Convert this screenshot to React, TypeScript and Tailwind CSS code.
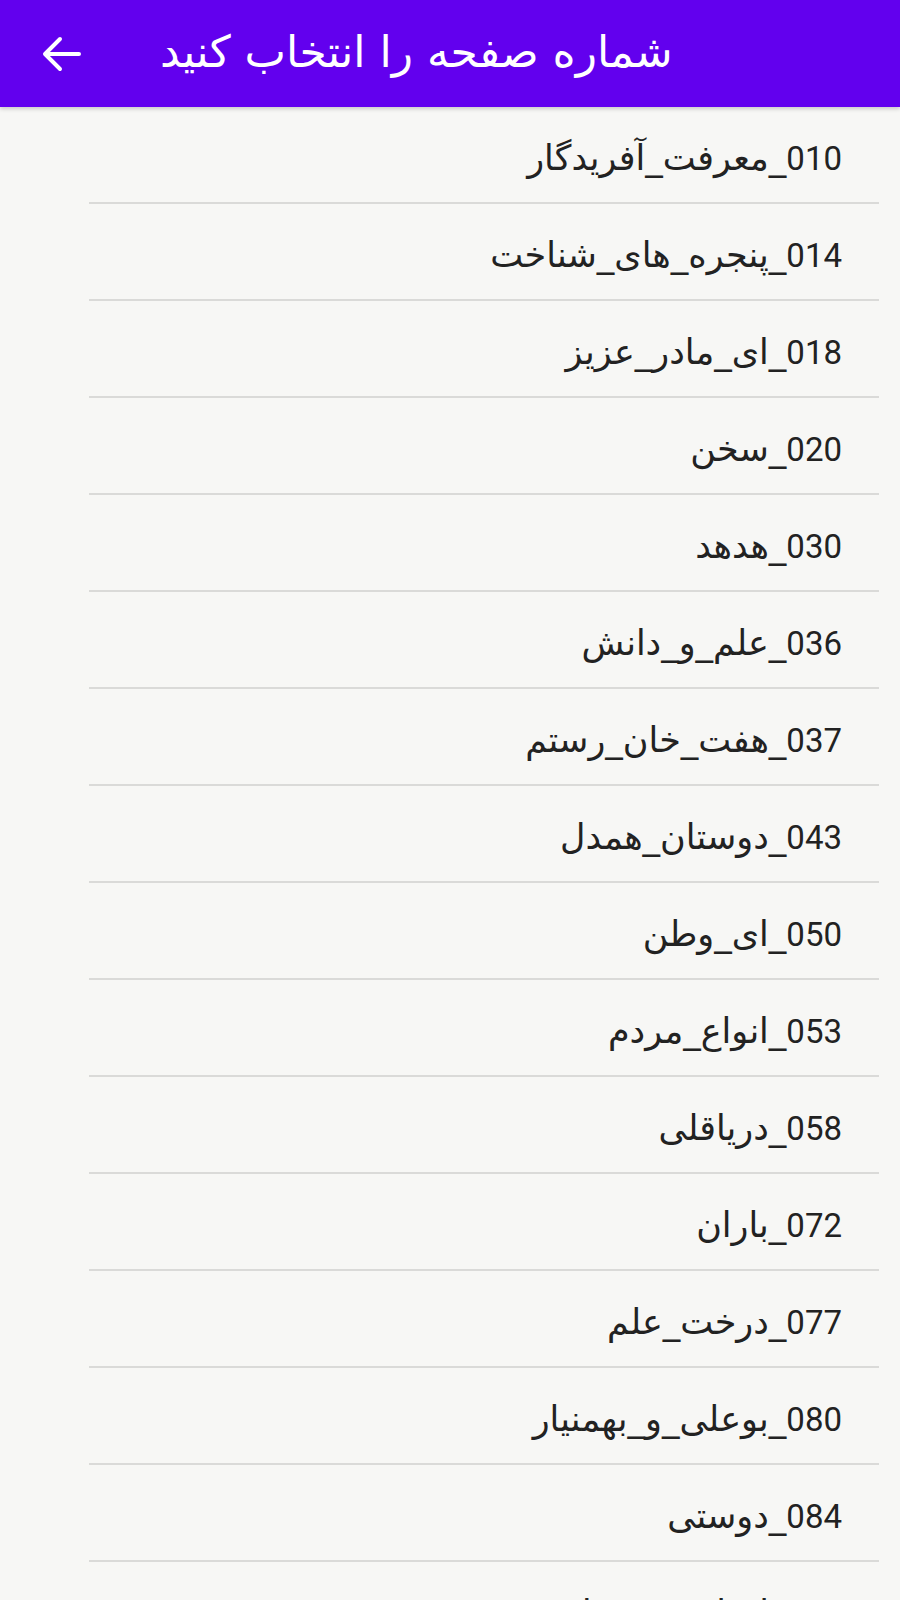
const PAGES = [
  "010_معرفت_آفریدگار",
  "014_پنجره_های_شناخت",
  "018_ای_مادر_عزیز",
  "020_سخن",
  "030_هدهد",
  "036_علم_و_دانش",
  "037_هفت_خان_رستم",
  "043_دوستان_همدل",
  "050_ای_وطن",
  "053_انواع_مردم",
  "058_دریاقلی",
  "072_باران",
  "077_درخت_علم",
  "080_بوعلی_و_بهمنیار",
  "084_دوستی",
  "088_اتحاد_و_همدلی",
];

function BackArrow() {
  return (
    <svg
      viewBox="0 0 40 36"
      className="h-[36px] w-[40px]"
      fill="none"
      stroke="currentColor"
      strokeWidth={4}
      strokeLinecap="round"
      strokeLinejoin="round"
      aria-hidden
    >
      <path d="M37 18H4M18 3L3 18l15 15" />
    </svg>
  );
}

export default function App() {
  return (
    <div className="min-h-[1600px] overflow-hidden bg-[#f7f7f5] font-['Roboto','DejaVu_Sans',sans-serif]">
      <header className="relative z-10 flex h-[107px] items-center bg-[#6200ee] shadow-[0_2px_4px_rgba(0,0,0,0.18)]">
        <button
          type="button"
          aria-label="بازگشت"
          className="ml-[42px] flex h-[44px] w-[44px] items-center justify-start text-white"
        >
          <BackArrow />
        </button>
        <h1
          dir="rtl"
          className="ml-[74px] pb-[4px] font-['DejaVu_Sans',sans-serif] text-[44px] font-normal leading-none text-white"
        >
          شماره صفحه را انتخاب کنید
        </h1>
      </header>

      <ul dir="rtl">
        {PAGES.map((page) => {
          const num = page.slice(0, 3);
          const name = page.slice(3);
          return (
            <li
              key={page}
              className="ml-[89px] mr-[21px] flex h-[97px] items-center border-b-2 border-[#dadad8] pr-[37px] pt-[8px] text-[#222222]"
            >
              <span className="text-[33px]">{num}</span>
              <span className="font-['DejaVu_Sans',sans-serif] text-[35px]">
                {name}
              </span>
            </li>
          );
        })}
      </ul>
    </div>
  );
}
